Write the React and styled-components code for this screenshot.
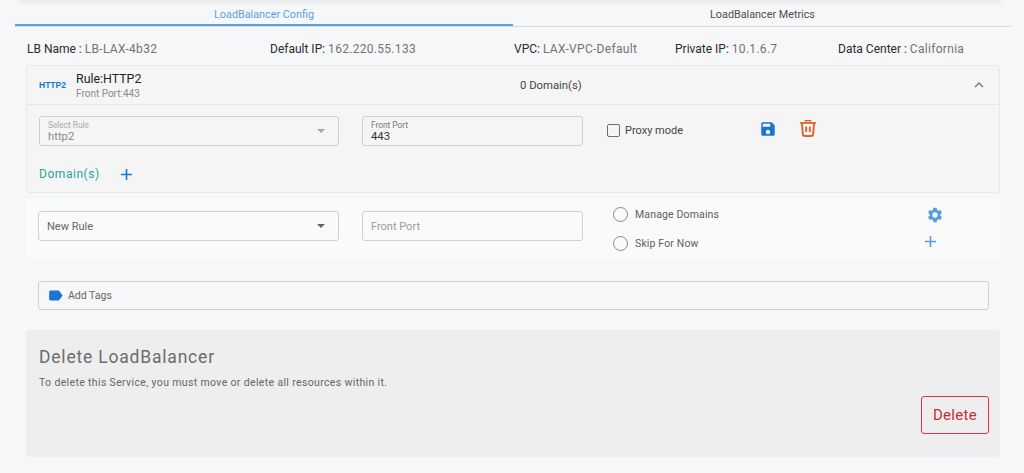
import React from "react";
import styled, { createGlobalStyle } from "styled-components";

const Global = createGlobalStyle`
  html, body { margin: 0; padding: 0; background: #f6f7f9; }
  body { font-family: "Roboto", "Liberation Sans", sans-serif; color: #333; overflow: hidden; }
  * { box-sizing: border-box; }
`;

const Page = styled.div`
  width: 1024px;
  height: 473px;
  overflow: hidden;
  display: flex;
  flex-direction: column;
  position: relative;
`;
const TopShadow = styled.div`
  height: 0;
  margin: 0 24px 0 20px;
  box-shadow: 0 0 5px 1px rgba(0, 0, 0, 0.16);
`;
const Tabs = styled.div`
  display: flex;
  margin: 0 12px 0 15px;
  height: 27px;
  border-bottom: 1px solid #d8dde3;
`;
const Tab = styled.div`
  flex: 0 0 ${(p) => (p.$active ? "498px" : "499px")};
  height: 26px;
  display: flex;
  align-items: center;
  justify-content: center;
  padding-top: ${(p) => (p.$active ? "4px" : "2px")};
  font-size: 10.8px;
  color: ${(p) => (p.$active ? "#5b9fe3" : "#4c4c4c")};
  border-bottom: ${(p) => (p.$active ? "2px solid #5b9fe3" : "none")};
`;
const Info = styled.div`
  display: flex;
  padding: 14px 0 0 27px;
  height: 38px;
  font-size: 12px;
  line-height: 16px;
`;
const InfoItem = styled.div`
  flex: 0 0 ${(p) => p.$w}px;
  white-space: nowrap;
  color: #2b2b2b;
`;
const InfoValue = styled.span`
  color: #737373;
  letter-spacing: 0.3px;
`;
const Card = styled.div`
  margin: 0 24px 0 26px;
  height: 128px;
  background: #f5f5f6;
  border: 1px solid #e6e7e9;
  border-radius: 3px;
  display: flex;
  flex-direction: column;
`;
const CardHead = styled.div`
  height: 39px;
  flex: none;
  border-bottom: 1px solid #e6e7e9;
  display: flex;
  align-items: center;
  padding: 0 11px 0 12px;
`;
const Badge = styled.div`
  width: 37px;
  font-family: "Liberation Sans", sans-serif;
  font-size: 8.5px;
  font-weight: 700;
  color: #1976d2;
`;
const RuleInfo = styled.div`
  width: 444px;
  display: flex;
  flex-direction: column;
  margin-top: 1px;
`;
const RuleTitle = styled.div`
  font-size: 12.4px;
  line-height: 15px;
  color: #1f1f1f;
`;
const RuleSub = styled.div`
  font-size: 10px;
  line-height: 15px;
  color: #8b8b8b;
`;
const Count = styled.div`
  flex: 1;
  font-size: 11.3px;
  color: #444;
`;
const CardBody = styled.div`
  padding: 11px 12px 0;
`;
const FormRow = styled.div`
  display: flex;
  align-items: flex-start;
`;
const FieldBox = styled.div`
  flex: none;
  width: ${(p) => p.$w}px;
  height: 30px;
  margin-right: ${(p) => p.$mr || 0}px;
  border: 1px solid #cfd0d2;
  border-radius: 3px;
  padding: 0 8px;
  display: flex;
  align-items: center;
  justify-content: space-between;
  position: relative;
`;
const FieldStack = styled.div`
  display: flex;
  flex-direction: column;
  padding-top: 2px;
`;
const FieldLabel = styled.div`
  font-size: 8.3px;
  line-height: 9px;
  color: ${(p) => (p.$muted ? "#a9a9a9" : "#777")};
`;
const FieldValue = styled.div`
  font-size: 11.3px;
  line-height: 13px;
  color: ${(p) => (p.$muted ? "#8a8a8a" : "#333")};
`;
const Placeholder = styled.div`
  font-size: 11px;
  color: ${(p) => (p.$light ? "#9a9a9a" : "#666")};
`;
const Caret = styled.div`
  width: 0;
  height: 0;
  margin-right: 5px;
  border-left: 4px solid transparent;
  border-right: 4px solid transparent;
  border-top: 4px solid ${(p) => (p.$muted ? "#a5a5a5" : "#666")};
`;
const Proxy = styled.div`
  width: 152px;
  margin: -1px 0 0 24px;
  height: 30px;
  display: flex;
  align-items: center;
  gap: 5px;
  font-size: 11px;
  color: #444;
`;
const CheckBox = styled.div`
  width: 13px;
  height: 13px;
  border: 1.5px solid #6d6d6d;
  border-radius: 2px;
`;
const IconSlot = styled.div`
  flex: none;
  width: ${(p) => p.$w}px;
  height: ${(p) => p.$h}px;
  display: flex;
  align-items: center;
  line-height: 0;
`;
const DomainRow = styled.div`
  display: flex;
  align-items: center;
  gap: 17px;
  margin-top: 20px;
  height: 16px;
`;
const DomainLabel = styled.div`
  font-size: 12px;
  letter-spacing: 0.55px;
  color: #26a69a;
`;
const NewRule = styled.div`
  margin: 6px 24px 0 26px;
  height: 59px;
  background: #fafafa;
  padding: 12px 0 0 12px;
  display: flex;
  align-items: flex-start;
  position: relative;
`;
const Radios = styled.div`
  width: 313px;
  margin: -4px 0 0 30px;
  display: flex;
  flex-direction: column;
  gap: 14px;
`;
const RadioRow = styled.div`
  display: flex;
  align-items: center;
  gap: 7px;
  height: 15px;
  font-size: 10.5px;
  letter-spacing: 0.15px;
  color: #5d5d5d;
`;
const RadioDot = styled.div`
  width: 15px;
  height: 15px;
  border: 1.5px solid #8a8a8a;
  border-radius: 50%;
`;
const ActionCol = styled.div`
  margin: -5px 0 0 0;
  display: flex;
  flex-direction: column;
  align-items: flex-start;
  line-height: 0;
  gap: 8px;
`;
const PlusOffset = styled.div`
  margin-left: -5px;
`;
const TagsBar = styled.div`
  margin: 23px 35px 0 38px;
  height: 29px;
  border: 1px solid #cfd0d2;
  border-radius: 3px;
  display: flex;
  align-items: center;
  gap: 4px;
  padding-left: 8px;
  font-size: 10.5px;
  color: #666;
`;
const Danger = styled.div`
  margin: 20px 24px 0 26px;
  height: 127px;
  background: #eeeeee;
  border-radius: 3px;
  padding: 16px 11px 0 13px;
  display: flex;
  flex-direction: column;
`;
const DangerTitle = styled.div`
  font-size: 17.5px;
  line-height: 22px;
  color: #6c6c6c;
  letter-spacing: 0.8px;
`;
const DangerText = styled.div`
  margin-top: 8px;
  font-size: 10.5px;
  line-height: 13px;
  letter-spacing: 0.35px;
  color: #666;
`;
const DeleteBtn = styled.button`
  align-self: flex-end;
  margin-top: 7px;
  width: 68px;
  height: 38px;
  background: transparent;
  border: 1px solid #dc3545;
  border-radius: 3px;
  color: #c62c3a;
  font-family: inherit;
  font-size: 15px;
  letter-spacing: 0.3px;
  padding: 0;
`;

const Icon = ({ d, size, color }) => (
  <svg width={size} height={size} viewBox="0 0 24 24" fill={color}>
    <path d={d} />
  </svg>
);
const PLUS = "M19 13h-6v6h-2v-6H5v-2h6V5h2v6h6v2z";
const SAVE = "M17 3H5c-1.11 0-2 .9-2 2v14c0 1.1.89 2 2 2h14c1.1 0 2-.9 2-2V7l-4-4zm-5 16c-1.66 0-3-1.34-3-3s1.34-3 3-3 3 1.34 3 3-1.34 3-3 3zm3-10H5V5h10v4z";
const GEAR = "M19.14 12.94c.04-.3.06-.61.06-.94 0-.32-.02-.64-.07-.94l2.03-1.58c.18-.14.23-.41.12-.61l-1.92-3.32c-.12-.22-.37-.29-.59-.22l-2.39.96c-.5-.38-1.03-.7-1.62-.94l-.36-2.54c-.04-.24-.24-.41-.48-.41h-3.84c-.24 0-.43.17-.47.41l-.36 2.54c-.59.24-1.13.57-1.62.94l-2.39-.96c-.22-.08-.47 0-.59.22L2.74 8.87c-.12.21-.08.47.12.61l2.03 1.58c-.05.3-.09.63-.09.94s.02.64.07.94l-2.03 1.58c-.18.14-.23.41-.12.61l1.92 3.32c.12.22.37.29.59.22l2.39-.96c.5.38 1.03.7 1.62.94l.36 2.54c.05.24.24.41.48.41h3.84c.24 0 .44-.17.47-.41l.36-2.54c.59-.24 1.13-.56 1.62-.94l2.39.96c.22.08.47 0 .59-.22l1.92-3.32c.12-.22.07-.47-.12-.61l-2.01-1.58zM12 15.6c-1.98 0-3.6-1.62-3.6-3.6s1.62-3.6 3.6-3.6 3.6 1.62 3.6 3.6-1.62 3.6-3.6 3.6z";
const LABEL = "M17.63 5.84C17.27 5.33 16.67 5 16 5L5 5.01C3.9 5.01 3 5.9 3 7v10c0 1.1.9 1.99 2 1.99L16 19c.67 0 1.27-.33 1.63-.84L22 12l-4.37-6.16z";
const CHEVRON = "M12 8l-6 6 1.41 1.41L12 10.83l4.59 4.58L18 14z";

const Trash = () => (
  <svg width="18" height="18" viewBox="0 0 18 18" fill="none" stroke="#e2602c">
    <path d="M1 4h16" strokeWidth="1.8" />
    <path d="M6.5 2.8V1.6h5v1.2" strokeWidth="1.4" />
    <path d="M3 4.5l.8 10.6c.1 1 .8 1.9 2 1.9h6.4c1.2 0 1.9-.9 2-1.9L15 4.5" strokeWidth="1.9" />
    <path d="M7.2 7.5v5.5M10.8 7.5v5.5" strokeWidth="1.8" />
  </svg>
);

const info = [
  { k: "LB Name : ", v: "LB-LAX-4b32", w: 243 },
  { k: "Default IP: ", v: "162.220.55.133", w: 244 },
  { k: "VPC: ", v: "LAX-VPC-Default", w: 161 },
  { k: "Private IP: ", v: "10.1.6.7", w: 163 },
  { k: "Data Center : ", v: "California", w: 160 },
];

export default function App() {
  return (
    <Page>
      <Global />
      <TopShadow />
      <Tabs>
        <Tab $active>LoadBalancer Config</Tab>
        <Tab>LoadBalancer Metrics</Tab>
      </Tabs>
      <Info>
        {info.map((i) => (
          <InfoItem key={i.k} $w={i.w}>
            {i.k}
            <InfoValue>{i.v}</InfoValue>
          </InfoItem>
        ))}
      </Info>
      <Card>
        <CardHead>
          <Badge>HTTP2</Badge>
          <RuleInfo>
            <RuleTitle>Rule:HTTP2</RuleTitle>
            <RuleSub>Front Port:443</RuleSub>
          </RuleInfo>
          <Count>0 Domain(s)</Count>
          <Icon d={CHEVRON} size={18} color="#777" />
        </CardHead>
        <CardBody>
          <FormRow>
            <FieldBox $w={300} $mr={23}>
              <FieldStack>
                <FieldLabel $muted>Select Rule</FieldLabel>
                <FieldValue $muted>http2</FieldValue>
              </FieldStack>
              <Caret $muted />
            </FieldBox>
            <FieldBox $w={221}>
              <FieldStack>
                <FieldLabel>Front Port</FieldLabel>
                <FieldValue>443</FieldValue>
              </FieldStack>
            </FieldBox>
            <Proxy>
              <CheckBox />
              Proxy mode
            </Proxy>
            <IconSlot $w={40} $h={26}>
              <Icon d={SAVE} size={18} color="#1976d2" />
            </IconSlot>
            <IconSlot $w={20} $h={24}>
              <Trash />
            </IconSlot>
          </FormRow>
          <DomainRow>
            <DomainLabel>Domain(s)</DomainLabel>
            <Icon d={PLUS} size={19} color="#1976d2" />
          </DomainRow>
        </CardBody>
      </Card>
      <NewRule>
        <FieldBox $w={301} $mr={23}>
          <Placeholder>New Rule</Placeholder>
          <Caret />
        </FieldBox>
        <FieldBox $w={221}>
          <Placeholder $light>Front Port</Placeholder>
        </FieldBox>
        <Radios>
          <RadioRow>
            <RadioDot />
            Manage Domains
          </RadioRow>
          <RadioRow>
            <RadioDot />
            Skip For Now
          </RadioRow>
        </Radios>
        <ActionCol>
          <Icon d={GEAR} size={18} color="#5a9be0" />
          <PlusOffset>
            <Icon d={PLUS} size={19} color="#5a9be0" />
          </PlusOffset>
        </ActionCol>
      </NewRule>
      <TagsBar>
        <Icon d={LABEL} size={17} color="#1976d2" />
        Add Tags
      </TagsBar>
      <Danger>
        <DangerTitle>Delete LoadBalancer</DangerTitle>
        <DangerText>To delete this Service, you must move or delete all resources within it.</DangerText>
        <DeleteBtn>Delete</DeleteBtn>
      </Danger>
    </Page>
  );
}
